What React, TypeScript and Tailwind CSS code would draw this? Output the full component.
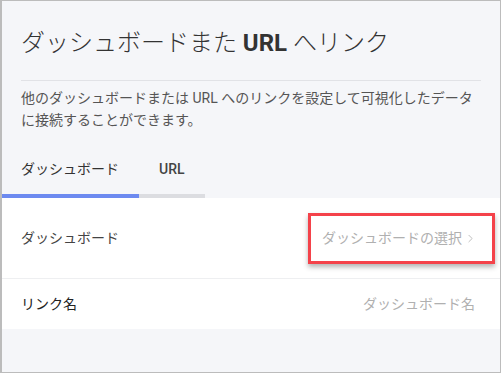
import { ChevronRight } from "lucide-react";

const font = "font-['Roboto','Noto_Sans_CJK_JP',sans-serif]";

export default function App() {
  return (
    <div className={`w-[501px] h-[373px] bg-[#f5f6f9] border border-l-2 border-[#bcbcbc] flex flex-col ${font}`}>
      <div className="px-[19px]">
        <h1 className="pt-[26px] text-[24px] leading-8 font-light text-[#333]">
          ダッシュボードまた <span className="font-bold text-[#333]">URL</span> へリンク
        </h1>
        <div className="mt-[21px] h-px bg-[#e1e2e6]" />
        <p className="mt-[6px] text-[14px] leading-[22px] text-[#555]">
          他のダッシュボードまたは URL へのリンクを設定して可視化したデータに接続することができます。
        </p>
      </div>

      <div className="mt-[28px] flex">
        <div className="w-[137px] pl-[19px] pb-[15px] border-b-4 border-[#6d8af0] text-[14px] leading-5 text-[#333]">
          ダッシュボード
        </div>
        <div className="w-[66px] pl-5 pb-[15px] border-b-4 border-[#dcdde1] text-[14px] leading-5 font-medium text-[#444]">
          URL
        </div>
      </div>

      <div className="bg-white">
        <div className="h-[81px] px-[19px] flex items-center justify-between border-b border-[#eeeff1] text-[14px]">
          <span className="text-[#444]">ダッシュボード</span>
          <span className="relative mr-[4px] flex items-center text-[#b0b0b0]">
            ダッシュボードの選択
            <ChevronRight className="ml-[2px] w-[13px] h-[13px]" strokeWidth={1.5} />
            <span className="absolute -left-[14px] -right-[18px] -top-[15px] -bottom-[15px] border-[3px] border-[#f4424a] shadow-[0_3px_5px_rgba(0,0,0,0.3)]" />
          </span>
        </div>
        <div className="h-[50px] px-[19px] flex items-center justify-between text-[14px]">
          <span className="text-[#222]">リンク名</span>
          <span className="mr-[6px] text-[#b0b0b0]">ダッシュボード名</span>
        </div>
      </div>
    </div>
  );
}
